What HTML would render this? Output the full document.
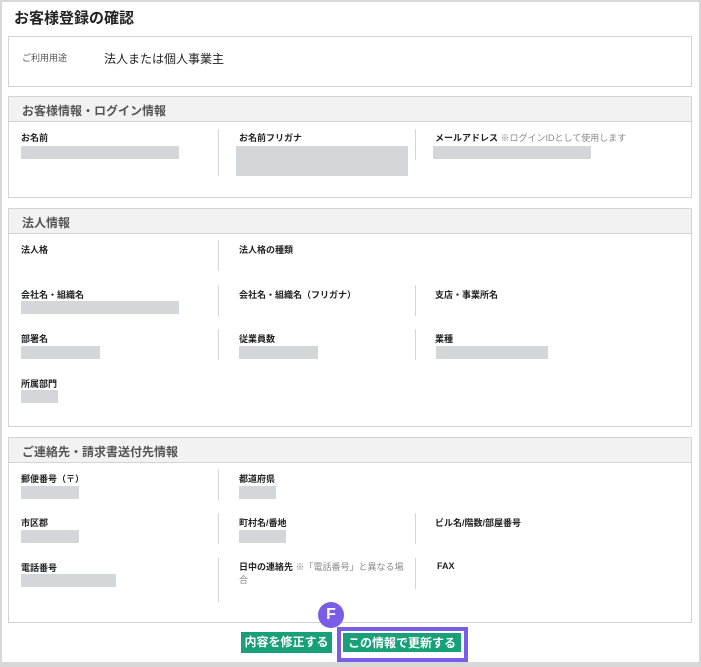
<!DOCTYPE html><html><head><meta charset="utf-8"><style>
*{margin:0;padding:0;box-sizing:border-box}
body{width:701px;height:667px;background:#fff;position:relative;overflow:hidden;font-family:"Liberation Sans","Noto Sans CJK JP",sans-serif;color:#222}
.a{position:absolute}
.frame{left:0;top:0;width:701px;height:667px;border:2px solid #d8d8d8;border-bottom:5px solid #d8d8d8;border-top-width:2px}
.box{position:absolute;left:8px;width:684px;border:1px solid #d4d4d4;background:#fff}
.hd{position:absolute;left:8px;width:684px;height:26px;background:#f2f2f2;border:1px solid #d4d4d4;font-size:12px;font-weight:bold;color:#555;padding:5px 0 0 13px}
.l{position:absolute;font-size:9px;font-weight:bold;color:#222;white-space:nowrap}
.n{font-weight:normal;color:#888;font-size:9px}
.g{position:absolute;background:#d4d7da}
.v{position:absolute;width:1px;background:#d4d4d4}
.btn{position:absolute;background:#17a07a;color:#fff;font-size:12px;font-weight:bold;text-align:center;line-height:21px}
</style></head><body>
<div class="a frame"></div>
<div class="a" style="left:14px;top:7px;font-size:15px;font-weight:bold">お客様登録の確認</div>
<div class="box" style="top:36px;height:51px"></div>
<div class="a" style="left:22px;top:51px;font-size:9px;color:#555">ご利用用途</div>
<div class="a" style="left:104px;top:50px;font-size:12px">法人または個人事業主</div>

<div class="box" style="top:96px;height:102px"></div>
<div class="hd" style="top:96px">お客様情報・ログイン情報</div>
<div class="l" style="left:21px;top:131px">お名前</div><div class="g" style="left:21px;top:146px;width:158px;height:13px"></div>
<div class="v" style="left:218px;top:129px;height:47px"></div>
<div class="l" style="left:239px;top:131px">お名前フリガナ</div><div class="g" style="left:236px;top:146px;width:172px;height:30px"></div>
<div class="v" style="left:415px;top:129px;height:31px"></div>
<div class="l" style="left:435px;top:131px">メールアドレス <span class="n">※ログインIDとして使用します</span></div><div class="g" style="left:433px;top:146px;width:158px;height:13px"></div>

<div class="box" style="top:208px;height:219px"></div>
<div class="hd" style="top:208px">法人情報</div>
<div class="l" style="left:21px;top:243px">法人格</div>
<div class="v" style="left:218px;top:240px;height:31px"></div>
<div class="l" style="left:239px;top:243px">法人格の種類</div>
<div class="l" style="left:21px;top:288px">会社名・組織名</div><div class="g" style="left:21px;top:301px;width:158px;height:13px"></div>
<div class="v" style="left:218px;top:285px;height:31px"></div>
<div class="l" style="left:239px;top:288px">会社名・組織名（フリガナ）</div>
<div class="v" style="left:415px;top:285px;height:31px"></div>
<div class="l" style="left:435px;top:288px">支店・事業所名</div>
<div class="l" style="left:21px;top:332px">部署名</div><div class="g" style="left:21px;top:346px;width:79px;height:13px"></div>
<div class="v" style="left:218px;top:329px;height:31px"></div>
<div class="l" style="left:239px;top:332px">従業員数</div><div class="g" style="left:239px;top:346px;width:79px;height:13px"></div>
<div class="v" style="left:415px;top:329px;height:31px"></div>
<div class="l" style="left:435px;top:332px">業種</div><div class="g" style="left:436px;top:346px;width:112px;height:13px"></div>
<div class="l" style="left:21px;top:377px">所属部門</div><div class="g" style="left:21px;top:390px;width:37px;height:13px"></div>

<div class="box" style="top:437px;height:186px"></div>
<div class="hd" style="top:437px">ご連絡先・請求書送付先情報</div>
<div class="l" style="left:21px;top:472px">郵便番号（〒）</div><div class="g" style="left:21px;top:486px;width:58px;height:13px"></div>
<div class="v" style="left:218px;top:469px;height:31px"></div>
<div class="l" style="left:239px;top:472px">都道府県</div><div class="g" style="left:239px;top:486px;width:37px;height:13px"></div>
<div class="l" style="left:21px;top:516px">市区郡</div><div class="g" style="left:21px;top:530px;width:58px;height:13px"></div>
<div class="v" style="left:218px;top:513px;height:31px"></div>
<div class="l" style="left:239px;top:516px">町村名/番地</div><div class="g" style="left:239px;top:530px;width:47px;height:13px"></div>
<div class="v" style="left:415px;top:513px;height:31px"></div>
<div class="l" style="left:435px;top:516px">ビル名/階数/部屋番号</div>
<div class="l" style="left:21px;top:561px">電話番号</div><div class="g" style="left:21px;top:574px;width:95px;height:13px"></div>
<div class="v" style="left:218px;top:558px;height:44px"></div>
<div class="l" style="left:239px;top:561px;line-height:13px">日中の連絡先 <span class="n">※「電話番号」と異なる場<br>合</span></div>
<div class="v" style="left:415px;top:558px;height:31px"></div>
<div class="l" style="left:437px;top:561px">FAX</div>

<div class="btn" style="left:241px;top:632px;width:91px;height:21px">内容を修正する</div>
<div class="a" style="left:337px;top:627px;width:131px;height:35px;border:4px solid #7b5ce6"></div>
<div class="btn" style="left:342px;top:632px;width:120px;height:21px;border:1px solid #fff">この情報で更新する</div>
<div class="a" style="left:318px;top:602px;width:26px;height:26px;border-radius:50%;background:#7b5ce6;color:#fff;font-size:16px;font-weight:bold;text-align:center;line-height:26px">F</div>
</body></html>
